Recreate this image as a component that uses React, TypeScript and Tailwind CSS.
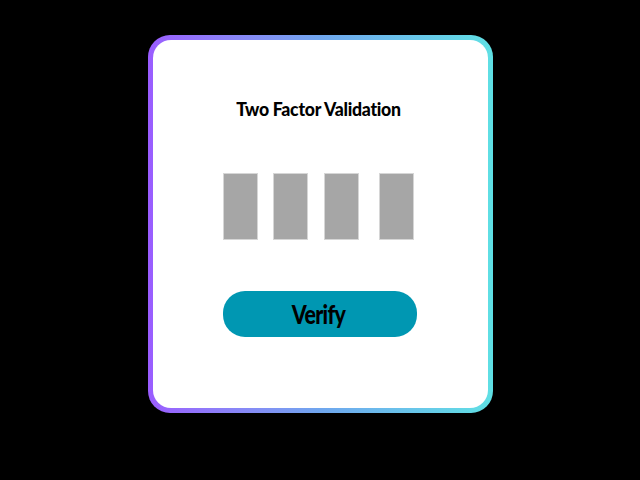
export default function App() {
  return (
    <div className="w-[640px] h-[480px] bg-black flex justify-center pt-[35px]">
      <div className="w-[345px] h-[378px] rounded-[22px] p-[5px] bg-gradient-to-r from-[#9a5cff] via-[#6fa6ee] to-[#5fe0e4]">
        <div className="w-full h-full bg-white rounded-[18px] flex flex-col items-center">
          <h1 className="mt-[57px] text-[19px] leading-[24px] font-black text-black font-['Lato',sans-serif] tracking-[-0.3px] scale-x-[0.93] mr-[3px]">
            Two Factor Validation
          </h1>
          <div className="mt-[52px] flex mr-[4px]">
            <div className="w-[35px] h-[67px] bg-[#a6a6a6] border border-[#d6d6d6]" />
            <div className="w-[35px] h-[67px] bg-[#a6a6a6] border border-[#d6d6d6] ml-[15px]" />
            <div className="w-[35px] h-[67px] bg-[#a6a6a6] border border-[#d6d6d6] ml-[16px]" />
            <div className="w-[35px] h-[67px] bg-[#a6a6a6] border border-[#d6d6d6] ml-[20px]" />
          </div>
          <button className="mt-[51px] w-[194px] h-[46px] rounded-[22px] bg-[#0097b2] flex items-center justify-center text-black font-['Lato',sans-serif]">
            <span className="inline-block text-[26px] leading-[30px] font-black tracking-[-0.8px] scale-x-[0.82] mr-[2px]">Verify</span>
          </button>
        </div>
      </div>
    </div>
  );
}
